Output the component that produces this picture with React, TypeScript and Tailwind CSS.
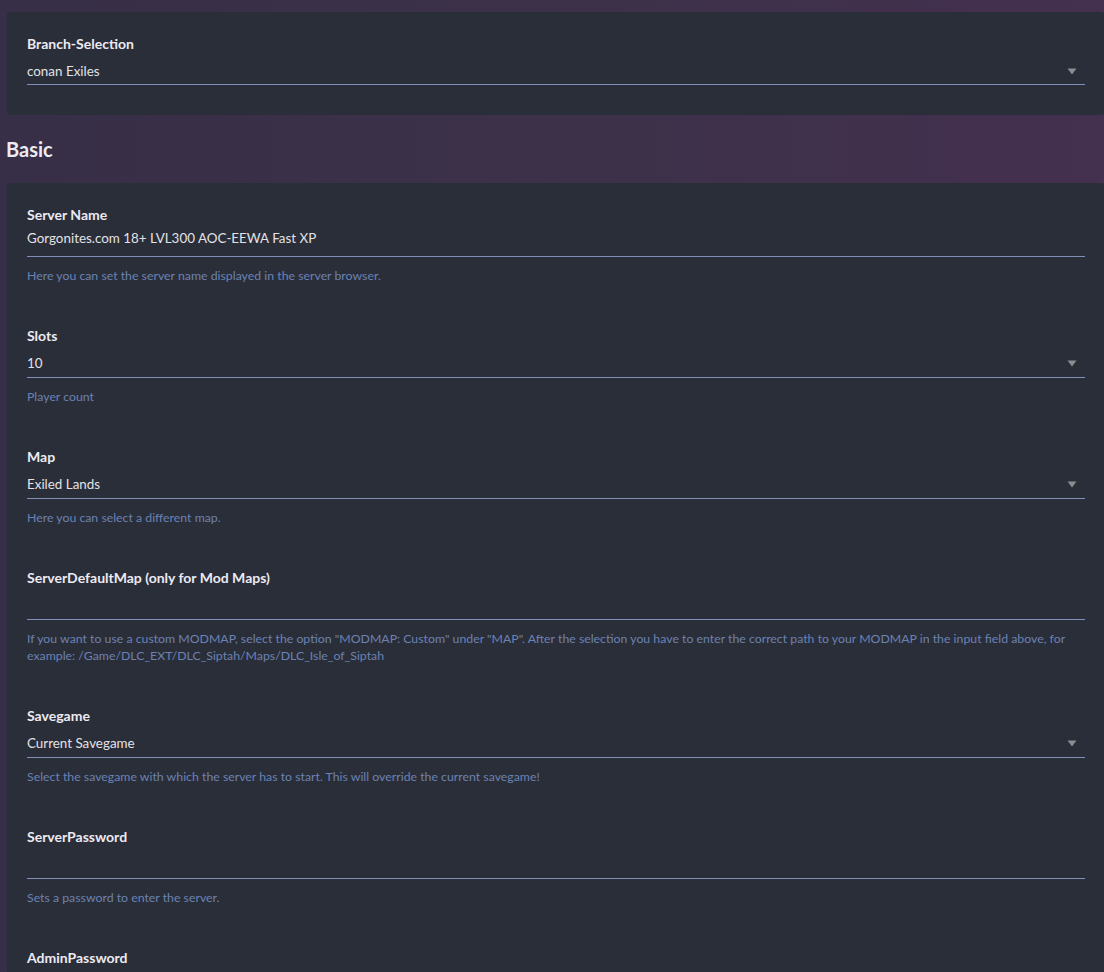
import { ReactNode } from 'react'

type Field = {
  label: string
  value?: string
  select?: boolean
  help?: ReactNode
}

const fields: Field[] = [
  {
    label: 'Server Name',
    value: 'Gorgonites.com 18+ LVL300 AOC-EEWA Fast XP',
    help: 'Here you can set the server name displayed in the server browser.',
  },
  { label: 'Slots', value: '10', select: true, help: 'Player count' },
  { label: 'Map', value: 'Exiled Lands', select: true, help: 'Here you can select a different map.' },
  {
    label: 'ServerDefaultMap (only for Mod Maps)',
    help: (
      <>
        If you want to use a custom MODMAP, select the option "MODMAP: Custom" under "MAP". After the
        selection you have to enter the correct path to your MODMAP in the input field above, for
        example: /Game/DLC_EXT/DLC_Siptah/Maps/DLC_Isle_of_Siptah
      </>
    ),
  },
  {
    label: 'Savegame',
    value: 'Current Savegame',
    select: true,
    help: 'Select the savegame with which the server has to start. This will override the current savegame!',
  },
  { label: 'ServerPassword', help: 'Sets a password to enter the server.' },
  { label: 'AdminPassword', help: 'Sets a password for the admin.' },
]

function Arrow() {
  return (
    <svg width="10" height="7" viewBox="0 0 10 7" className="mr-[8px] shrink-0">
      <path d="M0.5 0.5 L9.5 0.5 L5 6.5 Z" fill="#8c8c8f" />
    </svg>
  )
}

function FormField({ field }: { field: Field }) {
  return (
    <div className="pb-[43px]">
      <div className="text-[14px] font-bold leading-[18px] text-[#eceaf2]">{field.label}</div>
      <div className="mr-[19px] flex h-[33px] items-end border-b border-[#7f8fb8]">
        {field.select ? (
          <div className="flex w-full items-center justify-between pb-[5px]">
            <span className="text-[13.4px] leading-[18px] text-[#e2e2e6]">{field.value}</span>
            <Arrow />
          </div>
        ) : (
          <div className="w-full pb-[9px] text-[13.4px] leading-[18px] text-[#e2e2e6]">{field.value ?? '\u00a0'}</div>
        )}
      </div>
      {field.help && (
        <p className="mt-[10px] pr-[19px] text-[12.3px] leading-[17px] text-[#6c82b2]">{field.help}</p>
      )}
    </div>
  )
}

export default function App() {
  return (
    <div
      className="min-h-screen w-full bg-gradient-to-r from-[#372f47] via-[#3c3149] to-[#44304f] pl-[7px] pt-[12px]"
      style={{ fontFamily: 'Lato, "Noto Sans", sans-serif' }}
    >
      <section className="rounded-[3px] bg-[#2a2e39] pl-[20px] pt-[23px] pb-[30px]">
        <div className="text-[14px] font-bold leading-[18px] text-[#eceaf2]">Branch-Selection</div>
        <div className="mr-[19px] flex h-[32px] items-end border-b border-[#7f8fb8]">
          <div className="flex w-full items-center justify-between pb-[4px]">
            <span className="text-[13.4px] leading-[18px] text-[#e2e2e6]">conan Exiles</span>
            <Arrow />
          </div>
        </div>
      </section>
      <h2 className="ml-[-1px] pt-[22px] pb-[22px] text-[20px] font-bold leading-[24px] text-[#ecebf2]">Basic</h2>
      <section className="rounded-t-[3px] bg-[#2a2e39] pl-[20px] pt-[23px]">
        {fields.map((f) => (
          <FormField key={f.label} field={f} />
        ))}
      </section>
    </div>
  )
}
